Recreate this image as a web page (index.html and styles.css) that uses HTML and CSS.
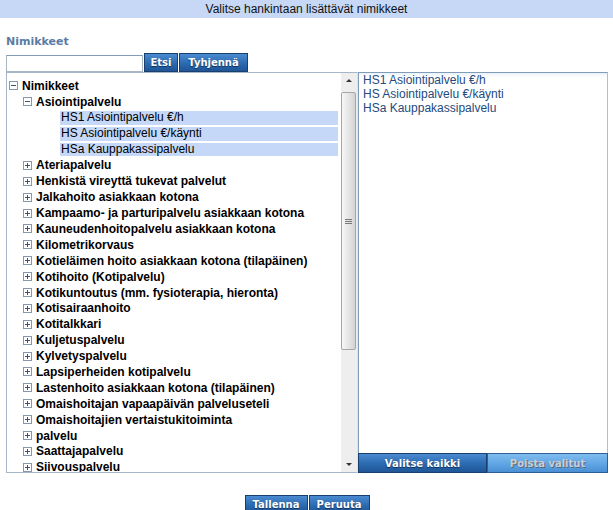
FILE: index.html
```html
<!DOCTYPE html>
<html lang="fi">
<head>
  <meta charset="UTF-8">
  <title>Valitse hankintaan lisättävät nimikkeet</title>
  <link rel="stylesheet" href="styles.css">
</head>
<body>
  <div class="titlebar">Valitse hankintaan lisättävät nimikkeet</div>

  <div class="content">
    <div class="section-label">Nimikkeet</div>

    <div class="search-row">
      <input type="text" class="search-input">
      <button class="btn btn-search">Etsi</button>
      <button class="btn btn-clear">Tyhjennä</button>
    </div>

    <div class="panels">
      <div class="tree-panel">
        <ul class="tree">
          <li>
            <div class="node"><span class="toggle"></span><span class="label">Nimikkeet</span></div>
            <ul>
              <li>
                <div class="node"><span class="toggle"></span><span class="label">Asiointipalvelu</span></div>
                <ul class="leaves">
                  <li class="leaf">HS1 Asiointipalvelu €/h</li>
                  <li class="leaf">HS Asiointipalvelu €/käynti</li>
                  <li class="leaf">HSa Kauppakassipalvelu</li>
                </ul>
              </li>
              <li><div class="node"><span class="toggle plus"></span><span class="label">Ateriapalvelu</span></div></li>
              <li><div class="node"><span class="toggle plus"></span><span class="label">Henkistä vireyttä tukevat palvelut</span></div></li>
              <li><div class="node"><span class="toggle plus"></span><span class="label">Jalkahoito asiakkaan kotona</span></div></li>
              <li><div class="node"><span class="toggle plus"></span><span class="label">Kampaamo- ja parturipalvelu asiakkaan kotona</span></div></li>
              <li><div class="node"><span class="toggle plus"></span><span class="label">Kauneudenhoitopalvelu asiakkaan kotona</span></div></li>
              <li><div class="node"><span class="toggle plus"></span><span class="label">Kilometrikorvaus</span></div></li>
              <li><div class="node"><span class="toggle plus"></span><span class="label">Kotieläimen hoito asiakkaan kotona (tilapäinen)</span></div></li>
              <li><div class="node"><span class="toggle plus"></span><span class="label">Kotihoito (Kotipalvelu)</span></div></li>
              <li><div class="node"><span class="toggle plus"></span><span class="label">Kotikuntoutus (mm. fysioterapia, hieronta)</span></div></li>
              <li><div class="node"><span class="toggle plus"></span><span class="label">Kotisairaanhoito</span></div></li>
              <li><div class="node"><span class="toggle plus"></span><span class="label">Kotitalkkari</span></div></li>
              <li><div class="node"><span class="toggle plus"></span><span class="label">Kuljetuspalvelu</span></div></li>
              <li><div class="node"><span class="toggle plus"></span><span class="label">Kylvetyspalvelu</span></div></li>
              <li><div class="node"><span class="toggle plus"></span><span class="label">Lapsiperheiden kotipalvelu</span></div></li>
              <li><div class="node"><span class="toggle plus"></span><span class="label">Lastenhoito asiakkaan kotona (tilapäinen)</span></div></li>
              <li><div class="node"><span class="toggle plus"></span><span class="label">Omaishoitajan vapaapäivän palveluseteli</span></div></li>
              <li><div class="node"><span class="toggle plus"></span><span class="label">Omaishoitajien vertaistukitoiminta</span></div></li>
              <li><div class="node"><span class="toggle plus"></span><span class="label">palvelu</span></div></li>
              <li><div class="node"><span class="toggle plus"></span><span class="label">Saattajapalvelu</span></div></li>
              <li><div class="node"><span class="toggle plus"></span><span class="label">Siivouspalvelu</span></div></li>
            </ul>
          </li>
        </ul>

        <!-- fake scrollbar, drawn so it looks like the old IE one -->
        <div class="scrollbar">
          <div class="scroll-arrow up"></div>
          <div class="scroll-thumb"><span class="grip"></span></div>
          <div class="scroll-arrow down"></div>
        </div>
      </div>

      <div class="selected-panel">
        <ul class="selected-list">
          <li>HS1 Asiointipalvelu €/h</li>
          <li>HS Asiointipalvelu €/käynti</li>
          <li>HSa Kauppakassipalvelu</li>
        </ul>
        <div class="selected-actions">
          <button class="btn btn-select-all">Valitse kaikki</button>
          <button class="btn btn-remove" disabled>Poista valitut</button>
        </div>
      </div>
    </div>

    <div class="form-actions">
      <button class="btn btn-save">Tallenna</button>
      <button class="btn btn-cancel">Peruuta</button>
    </div>
  </div>
</body>
</html>
```

FILE: styles.css
```css
body {
  margin: 0;
  font-family: "Liberation Sans", Arial, sans-serif;
  font-size: 12px;
  color: #000;
  background: #fff;
  overflow: hidden;
}

ul {
  list-style: none;
  margin: 0;
  padding: 0;
}

.titlebar {
  height: 18px;
  line-height: 18px;
  background: #c6d8f6;
  text-align: center;
  color: #111;
}

.content {
  padding: 0 5px 0 6px;
}

.section-label {
  margin-top: 17px;
  height: 13px;
  line-height: 13px;
  font-family: "DejaVu Sans", Verdana, sans-serif;
  font-size: 11px;
  font-weight: bold;
  color: #5a7ca3;
}

.search-row {
  display: flex;
  align-items: flex-end;
  gap: 1px;
  height: 19px;
  margin-top: 5px;
}

.search-input {
  box-sizing: border-box;
  width: 137px;
  height: 17px;
  margin: 0;
  padding: 0 2px;
  border: 1px solid #a9b6c4;
  border-top-color: #7f9db9;
  font-family: "Liberation Sans", Arial, sans-serif;
  font-size: 12px;
}

.btn {
  box-sizing: border-box;
  height: 19px;
  margin: 0;
  padding: 0;
  border: 1px solid #183f6e;
  background: linear-gradient(#4a8ad0, #2a68ad 60%, #1f5596);
  color: #fff;
  font-family: "DejaVu Sans", Verdana, sans-serif;
  font-size: 10px;
  font-weight: bold;
  text-shadow: 0 1px 1px #0f2d55;
  cursor: pointer;
}

.btn-search {
  width: 34px;
}

.btn-clear {
  width: 69px;
}

.panels {
  display: flex;
  height: 401px;
}

.tree-panel {
  box-sizing: border-box;
  display: flex;
  width: 352px;
  border: 1px solid #a7b7ca;
  border-right-color: #dde4ec;
  overflow: hidden;
}

.tree {
  flex: 1;
  padding: 5px 0 0 2px;
  overflow: hidden;
  font-weight: bold;
}

.tree ul {
  padding-left: 14px;
}

.tree .leaves {
  display: flex;
  flex-direction: column;
  padding-left: 37px;
}

.node {
  display: flex;
  align-items: center;
  height: 15.9px;
  white-space: nowrap;
}

.label {
  margin-left: 4px;
}

.toggle {
  position: relative;
  box-sizing: border-box;
  flex: none;
  width: 9px;
  height: 9px;
  border: 1px solid #8798ae;
  background: #fff;
}

.toggle::before {
  content: "";
  position: absolute;
  left: 1px;
  top: 3px;
  width: 5px;
  height: 1px;
  background: #3b557a;
}

.toggle.plus::after {
  content: "";
  position: absolute;
  left: 3px;
  top: 1px;
  width: 1px;
  height: 5px;
  background: #3b557a;
}

.leaf {
  height: 13.9px;
  line-height: 13.9px;
  margin: 1px 3px 1px 0;
  padding-left: 1px;
  background: #c5d8f8;
  font-weight: normal;
  white-space: nowrap;
}

.scrollbar {
  display: flex;
  flex-direction: column;
  flex: none;
  width: 16px;
  background: #eeeeee;
}

.scroll-arrow {
  position: relative;
  height: 17px;
}

.scroll-arrow.up::after,
.scroll-arrow.down::after {
  content: "";
  position: absolute;
  left: 5px;
  border-left: 3px solid transparent;
  border-right: 3px solid transparent;
}

.scroll-arrow.up::after {
  top: 6px;
  border-bottom: 3px solid #333;
}

.scroll-arrow.down {
  margin-top: auto;
}

.scroll-arrow.down::after {
  top: 8px;
  border-top: 3px solid #333;
}

.scroll-thumb {
  box-sizing: border-box;
  display: flex;
  align-items: center;
  justify-content: center;
  width: 15px;
  height: 258px;
  margin-top: 2px;
  border: 1px solid #a6a6a6;
  border-radius: 2px;
  background: linear-gradient(90deg, #f7f7f7, #e2e2e2 60%, #d2d2d2);
}

.grip {
  width: 7px;
  height: 5px;
  background: repeating-linear-gradient(#777 0 1px, transparent 1px 2px);
}

.selected-panel {
  display: flex;
  flex-direction: column;
  width: 250px;
}

.selected-list {
  flex: 1;
  padding: 0 0 0 4px;
  border: 1px solid #7f9db9;
  border-right-color: #a9c1da;
  border-bottom: none;
  background: linear-gradient(#eaf1fa, #fff 4px);
  color: #244a7e;
  line-height: 14px;
}

.selected-actions {
  display: flex;
  height: 20px;
}

.selected-actions .btn {
  height: 20px;
}

.btn-select-all {
  width: 129px;
}

.btn-remove {
  flex: 1;
  border-color: #2f5f94;
  background: linear-gradient(#7fbcef, #5ea3e2 60%, #4a8fd2);
  color: #c9ced5;
  text-shadow: 1px 1px 0 #55697f;
  cursor: default;
}

.form-actions {
  display: flex;
  justify-content: center;
  gap: 1px;
  margin-top: 22px;
}

.btn-save {
  width: 63px;
}

.btn-cancel {
  width: 61px;
}
```
